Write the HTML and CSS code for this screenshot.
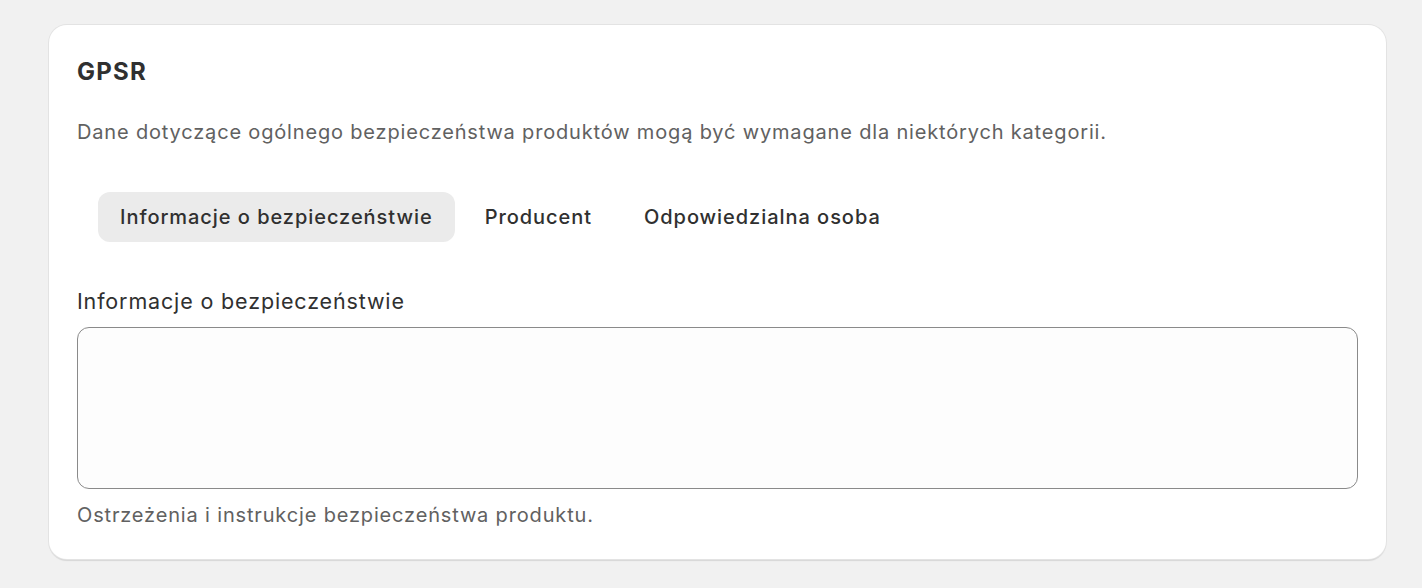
FILE: index.html
```html
<!DOCTYPE html>
<html lang="pl">
<head>
<meta charset="utf-8">
<link rel="stylesheet" href="styles.css">
</head>
<body>
<div class="page">
  <section class="card">
    <h2 class="title">GPSR</h2>
    <p class="desc">Dane dotyczące ogólnego bezpieczeństwa produktów mogą być wymagane dla niektórych kategorii.</p>
    <div class="tabs">
      <button class="tab active">Informacje o bezpieczeństwie</button>
      <button class="tab">Producent</button>
      <button class="tab">Odpowiedzialna osoba</button>
    </div>
    <div class="field">
      <label class="label" for="info">Informacje o bezpieczeństwie</label>
      <textarea id="info" class="textarea"></textarea>
      <p class="help">Ostrzeżenia i instrukcje bezpieczeństwa produktu.</p>
    </div>
  </section>
</div>
</body>
</html>
```
FILE: styles.css
```css
html, body {
  margin: 0;
  padding: 0;
  background: #f1f1f1;
  font-family: Inter, "Noto Sans", sans-serif;
  color: #303030;
}
.page {
  padding: 25px 36px 29px 49px;
}
.card {
  background: #ffffff;
  border-radius: 18px;
  box-shadow: 0 0 0 1px #e3e3e3, 0 2px 1px 0 rgba(26,26,26,0.12);
  padding: 32px 28px 0 28px;
  height: 534px;
  box-sizing: border-box;
}
.title {
  margin: 0;
  font-size: 24px;
  line-height: 30px;
  font-weight: 650;
  letter-spacing: 1.2px;
  color: #303030;
}
.desc {
  margin: 30px 0 0 0;
  font-size: 20px;
  line-height: 30px;
  letter-spacing: 0.83px;
  color: #616161;
}
.tabs {
  display: flex;
  gap: 8px;
  margin: 45px 0 0 21px;
}
.tab {
  font-family: inherit;
  font-size: 20px;
  font-weight: 550;
  line-height: 30px;
  letter-spacing: 0.95px;
  color: #303030;
  background: transparent;
  border: 0;
  border-radius: 12px;
  padding: 10px 22px;
  cursor: pointer;
}
.tab.active {
  background: #ebebeb;
}
.field {
  margin-top: 44px;
}
.label {
  display: block;
  font-size: 21.5px;
  line-height: 30px;
  letter-spacing: 0.85px;
  color: #303030;
}
.textarea {
  display: block;
  box-sizing: border-box;
  width: 100%;
  height: 162px;
  margin-top: 11px;
  border: 1px solid #8a8a8a;
  border-radius: 12px;
  background: #fdfdfd;
  resize: none;
  font-family: inherit;
}
.help {
  margin: 11px 0 0 0;
  font-size: 20px;
  line-height: 30px;
  letter-spacing: 0.84px;
  color: #616161;
}
```
